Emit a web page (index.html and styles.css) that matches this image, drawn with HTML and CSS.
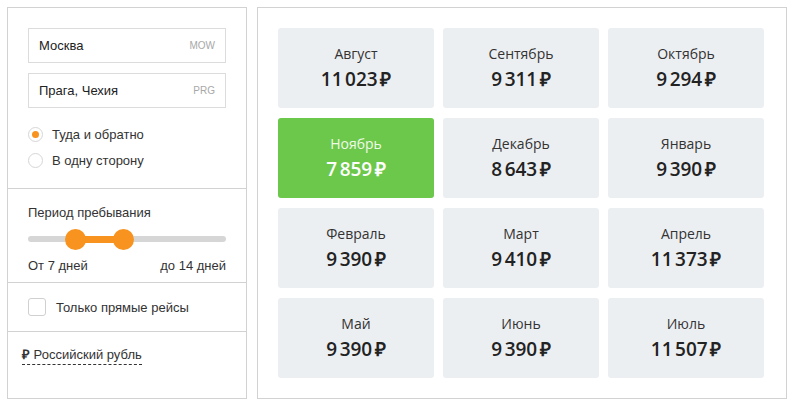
FILE: index.html
```html
<!DOCTYPE html>
<html lang="ru">
<head>
<meta charset="utf-8">
<link rel="stylesheet" href="styles.css">
</head>
<body>
<div class="page">
  <aside class="side">
    <section class="sec sec-route">
      <div class="field"><span class="city">Москва</span><span class="code">MOW</span></div>
      <div class="field"><span class="city">Прага, Чехия</span><span class="code">PRG</span></div>
      <div class="radios">
        <label class="radio"><span class="dot on"></span>Туда и обратно</label>
        <label class="radio"><span class="dot"></span>В одну сторону</label>
      </div>
    </section>
    <section class="sec sec-period">
      <div class="title">Период пребывания</div>
      <div class="slider">
        <div class="track"></div>
        <div class="range"></div>
        <span class="knob knob-a"></span>
        <span class="knob knob-b"></span>
      </div>
      <div class="limits"><span>От 7 дней</span><span>до 14 дней</span></div>
    </section>
    <section class="sec sec-direct">
      <label class="check"><span class="box"></span>Только прямые рейсы</label>
    </section>
    <section class="sec sec-cur">
      <span class="currency"><b class="rub">₽</b> Российский рубль</span>
    </section>
  </aside>
  <main class="months">
    <div class="card"><div class="m">Август</div><div class="p">11&#8239;023&#8239;₽</div></div>
    <div class="card"><div class="m">Сентябрь</div><div class="p">9&#8239;311&#8239;₽</div></div>
    <div class="card"><div class="m">Октябрь</div><div class="p">9&#8239;294&#8239;₽</div></div>
    <div class="card best"><div class="m">Ноябрь</div><div class="p">7&#8239;859&#8239;₽</div></div>
    <div class="card"><div class="m">Декабрь</div><div class="p">8&#8239;643&#8239;₽</div></div>
    <div class="card"><div class="m">Январь</div><div class="p">9&#8239;390&#8239;₽</div></div>
    <div class="card"><div class="m">Февраль</div><div class="p">9&#8239;390&#8239;₽</div></div>
    <div class="card"><div class="m">Март</div><div class="p">9&#8239;410&#8239;₽</div></div>
    <div class="card"><div class="m">Апрель</div><div class="p">11&#8239;373&#8239;₽</div></div>
    <div class="card"><div class="m">Май</div><div class="p">9&#8239;390&#8239;₽</div></div>
    <div class="card"><div class="m">Июнь</div><div class="p">9&#8239;390&#8239;₽</div></div>
    <div class="card"><div class="m">Июль</div><div class="p">11&#8239;507&#8239;₽</div></div>
  </main>
</div>
</body>
</html>
```
FILE: styles.css
```css
html, body {
  margin: 0;
  padding: 0;
  background: #fff;
}
body {
  font-family: "Liberation Sans", Arial, sans-serif;
  font-size: 13px;
  color: #333;
}
.page {
  display: flex;
  gap: 10px;
  padding: 7px 4px 6px 7px;
  align-items: stretch;
}
.side {
  width: 238px;
  border: 1px solid #d2d2d2;
  display: flex;
  flex-direction: column;
}
.sec {
  border-bottom: 1px solid #d2d2d2;
  padding: 0 20px;
}
.sec:last-child {
  border-bottom: none;
  flex: 1;
}
.sec-route {
  padding-top: 20px;
  padding-bottom: 20px;
}
.field {
  border: 1px solid #dcdcdc;
  box-sizing: border-box;
  height: 35px;
  display: flex;
  align-items: center;
  justify-content: space-between;
  padding: 0 10px 0 10px;
  margin-bottom: 10px;
}
.city {
  font-size: 13px;
  color: #222;
}
.code {
  font-size: 10px;
  color: #a8a8a8;
}
.radios {
  display: flex;
  flex-direction: column;
  gap: 11px;
  margin-top: 19px;
}
.radio {
  display: flex;
  align-items: center;
  gap: 9px;
  height: 15px;
  line-height: 15px;
}
.dot {
  width: 13px;
  height: 13px;
  border: 1px solid #d6d6d6;
  border-radius: 50%;
  box-sizing: content-box;
  display: flex;
  align-items: center;
  justify-content: center;
  background: #fff;
}
.dot.on::after {
  content: "";
  width: 7px;
  height: 7px;
  border-radius: 50%;
  background: #f7931e;
}
.sec-period {
  padding-top: 16px;
  padding-bottom: 8px;
}
.title {
  line-height: 16px;
}
.slider {
  position: relative;
  height: 21px;
  margin-top: 8px;
}
.track {
  position: absolute;
  left: 0;
  right: 0;
  top: 7px;
  height: 6px;
  border-radius: 3px;
  background: #d6d6d6;
}
.range {
  position: absolute;
  left: 47px;
  width: 48px;
  top: 7px;
  height: 7px;
  background: #f7931e;
}
.knob {
  position: absolute;
  top: 0;
  width: 21px;
  height: 21px;
  border-radius: 50%;
  background: #f7931e;
}
.knob-a { left: 37px; }
.knob-b { left: 85px; }
.limits {
  display: flex;
  justify-content: space-between;
  line-height: 16px;
  margin-top: 8px;
}
.sec-direct {
  padding-top: 15px;
  padding-bottom: 15px;
}
.check {
  display: flex;
  align-items: center;
  gap: 10px;
  height: 18px;
}
.box {
  border: 1px solid #d0d0d0;
  border-radius: 3px;
  box-sizing: border-box;
  width: 18px;
  height: 18px;
}
.sec-cur {
  padding-top: 15px;
  padding-left: 14px;
}
.currency {
  display: inline-block;
  line-height: 16px;
  border-bottom: 1px dashed #333;
  padding-bottom: 1px;
}
.rub {
  font-weight: 700;
}
.months {
  flex: 1;
  border: 1px solid #d2d2d2;
  padding: 20px 22px 20px 20px;
  display: grid;
  grid-template-columns: repeat(3, 1fr);
  grid-auto-rows: 80px;
  gap: 10px 9px;
}
.card {
  background: #eceff2;
  border-radius: 3px;
  display: flex;
  flex-direction: column;
  align-items: center;
  justify-content: center;
  gap: 4px;
  font-family: "Open Sans", "Liberation Sans", sans-serif;
  color: #333;
}
.card .m {
  font-size: 14px;
  line-height: 18px;
}
.card .p {
  font-size: 19px;
  font-weight: 600;
  line-height: 24px;
  color: #222;
}
.card.best {
  background: #6cc84a;
  color: #fff;
}
.card.best .m { color: #eef9e8; }
.card.best .p { color: #fff; }
```
